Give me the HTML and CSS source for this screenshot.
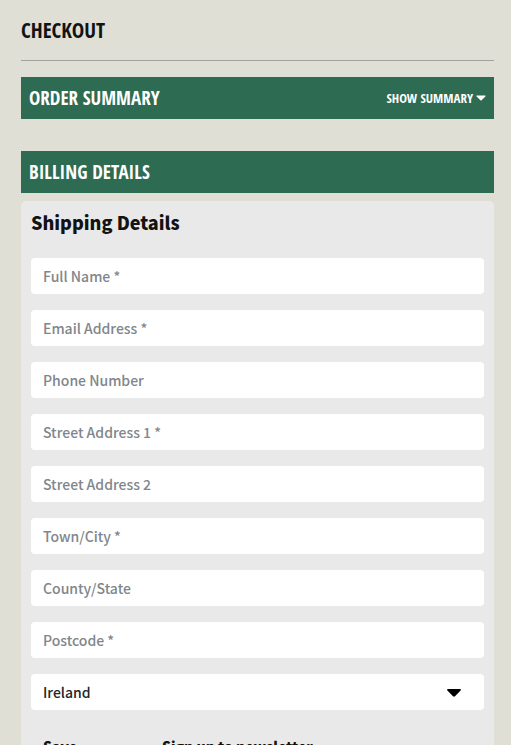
FILE: index.html
```html
<!DOCTYPE html>
<html lang="en">
<head>
<meta charset="utf-8">
<meta name="viewport" content="width=device-width, initial-scale=1">
<title>Checkout</title>
<link rel="stylesheet" href="styles.css">
</head>
<body>
<main class="checkout">
  <h1 class="title">CHECKOUT</h1>
  <section class="bar">
    <h2 class="bar-title">ORDER SUMMARY</h2>
    <button class="toggle" type="button">SHOW SUMMARY
      <svg class="caret" viewBox="0 0 10 6" aria-hidden="true"><path d="M1 .5h8c.6 0 .8.6.4 1L5.6 5.2c-.4.4-.8.4-1.2 0L.6 1.5C.2 1.1.4.5 1 .5z"/></svg>
    </button>
  </section>
  <section class="bar billing">
    <h2 class="bar-title">BILLING DETAILS</h2>
  </section>
  <form class="panel">
    <h3 class="panel-title">Shipping Details</h3>
    <input class="field" type="text" placeholder="Full Name *" aria-label="Full Name">
    <input class="field" type="email" placeholder="Email Address *" aria-label="Email Address">
    <input class="field" type="tel" placeholder="Phone Number" aria-label="Phone Number">
    <input class="field" type="text" placeholder="Street Address 1 *" aria-label="Street Address 1">
    <input class="field" type="text" placeholder="Street Address 2" aria-label="Street Address 2">
    <input class="field" type="text" placeholder="Town/City *" aria-label="Town/City">
    <input class="field" type="text" placeholder="County/State" aria-label="County/State">
    <input class="field" type="text" placeholder="Postcode *" aria-label="Postcode">
    <div class="select-wrap">
      <select class="field" aria-label="Country"><option>Ireland</option></select>
      <svg class="select-caret" viewBox="0 0 14 8" aria-hidden="true"><path d="M1 0h12c1 0 1.200.8.6 1.400L8 7.300c-.6.6-1.400.6-2 0L.4 1.400C-.2.8 0 0 1 0z"/></svg>
    </div>
    <div class="options">
      <label class="option">Save <input type="checkbox"></label>
      <label class="option">Sign up to newsletter <input type="checkbox"></label>
    </div>
  </form>
</main>
</body>
</html>
```
FILE: styles.css
```css
* { box-sizing: border-box; }
body {
  margin: 0;
  background: #dfdfd6;
  color: #131313;
  font-family: "Noto Sans CJK JP", "Noto Sans", sans-serif;
  font-size: 14px;
  line-height: 24px;
}
h1, h2, h3 { margin: 0; }
.checkout { padding: 16px 17px 0 21px; }
.title, .bar-title, .toggle {
  font-family: "Open Sans Condensed", "Roboto Condensed", "Liberation Sans Narrow", sans-serif;
  font-weight: 800;
}
.title {
  padding-bottom: 16px;
  border-bottom: 1px solid #a3a39d;
  font-size: 21px;
  line-height: 28px;
}
.bar {
  display: flex;
  align-items: center;
  justify-content: space-between;
  min-height: 42px;
  margin-top: 16px;
  padding: 0 8px;
  background: #2d6c52;
  color: #fff;
}
.billing { margin-top: 32px; }
.bar-title { font-size: 19px; line-height: 28px; }
.toggle {
  display: flex;
  align-items: center;
  gap: 3px;
  padding: 0;
  border: 0;
  background: none;
  color: inherit;
  font-size: 13px;
}
.caret { width: 10px; height: 6px; fill: currentColor; }
.panel {
  display: flex;
  flex-direction: column;
  gap: 16px;
  margin-top: 8px;
  padding: 9px 10px 24px;
  border-radius: 5px;
  background: #e9e9e9;
}
.panel-title, .option {
  font-family: "Noto Sans CJK JP Black", "Noto Sans CJK JP", sans-serif;
  font-weight: 900;
}
.panel-title {
  margin-bottom: 8px;
  font-size: 18px;
  line-height: 24px;
}
.field {
  display: block;
  width: 100%;
  height: 36px;
  padding: 0 12px;
  border: 0;
  border-radius: 4px;
  background: #fff;
  color: #212529;
  font: inherit;
  font-weight: 500;
  appearance: none;
}
.field::placeholder { color: #81868b; opacity: 1; }
.select-wrap { position: relative; }
.select-caret {
  position: absolute;
  top: 15px;
  right: 23px;
  width: 14px;
  height: 8px;
  pointer-events: none;
}
.options {
  display: flex;
  gap: 48px;
  padding: 8px 12px;
}
.option {
  display: flex;
  flex-direction: column;
  align-items: flex-start;
  min-width: 71px;
}
```
